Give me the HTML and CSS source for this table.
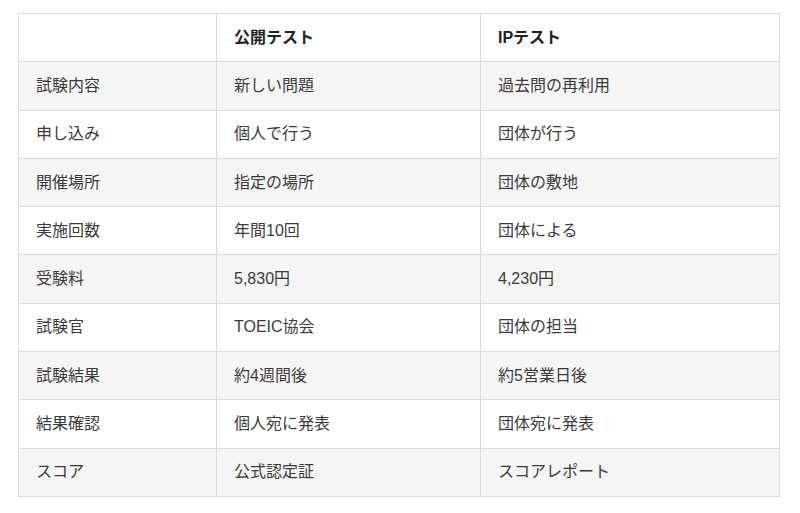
FILE: index.html
```html
<!DOCTYPE html>
<html lang="ja">
<head>
<meta charset="utf-8">
<link rel="stylesheet" href="styles.css">
</head>
<body>
<table class="compare">
  <colgroup>
    <col class="c1"><col class="c2"><col class="c3">
  </colgroup>
  <thead>
    <tr><th></th><th>公開テスト</th><th>IPテスト</th></tr>
  </thead>
  <tbody>
    <tr><td>試験内容</td><td>新しい問題</td><td>過去問の再利用</td></tr>
    <tr><td>申し込み</td><td>個人で行う</td><td>団体が行う</td></tr>
    <tr><td>開催場所</td><td>指定の場所</td><td>団体の敷地</td></tr>
    <tr><td>実施回数</td><td>年間10回</td><td>団体による</td></tr>
    <tr><td>受験料</td><td>5,830円</td><td>4,230円</td></tr>
    <tr><td>試験官</td><td>TOEIC協会</td><td>団体の担当</td></tr>
    <tr><td>試験結果</td><td>約4週間後</td><td>約5営業日後</td></tr>
    <tr><td>結果確認</td><td>個人宛に発表</td><td>団体宛に発表</td></tr>
    <tr><td>スコア</td><td>公式認定証</td><td>スコアレポート</td></tr>
  </tbody>
</table>
</body>
</html>
```

FILE: styles.css
```css
html, body {
  margin: 0;
  padding: 0;
  background: #ffffff;
}
body {
  padding: 13px 21px 0 18px;
  font-family: "Liberation Sans", "Noto Sans CJK JP", sans-serif;
  color: #3b3b3b;
  font-size: 16px;
}
.compare {
  width: 761px;
  border-collapse: collapse;
  table-layout: fixed;
}
.c1 { width: 198px; }
.c2 { width: 264px; }
.c3 { width: 299px; }
.compare th,
.compare td {
  border: 1px solid #dcdcdc;
  height: 48.3px;
  padding: 0 17px;
  text-align: left;
  vertical-align: middle;
  line-height: 20px;
  box-sizing: border-box;
}
.compare th {
  font-weight: bold;
  color: #222222;
  background: #ffffff;
}
.compare tbody tr:nth-child(odd) td {
  background: #f5f5f5;
}
.compare tbody tr:nth-child(even) td {
  background: #ffffff;
}
```
